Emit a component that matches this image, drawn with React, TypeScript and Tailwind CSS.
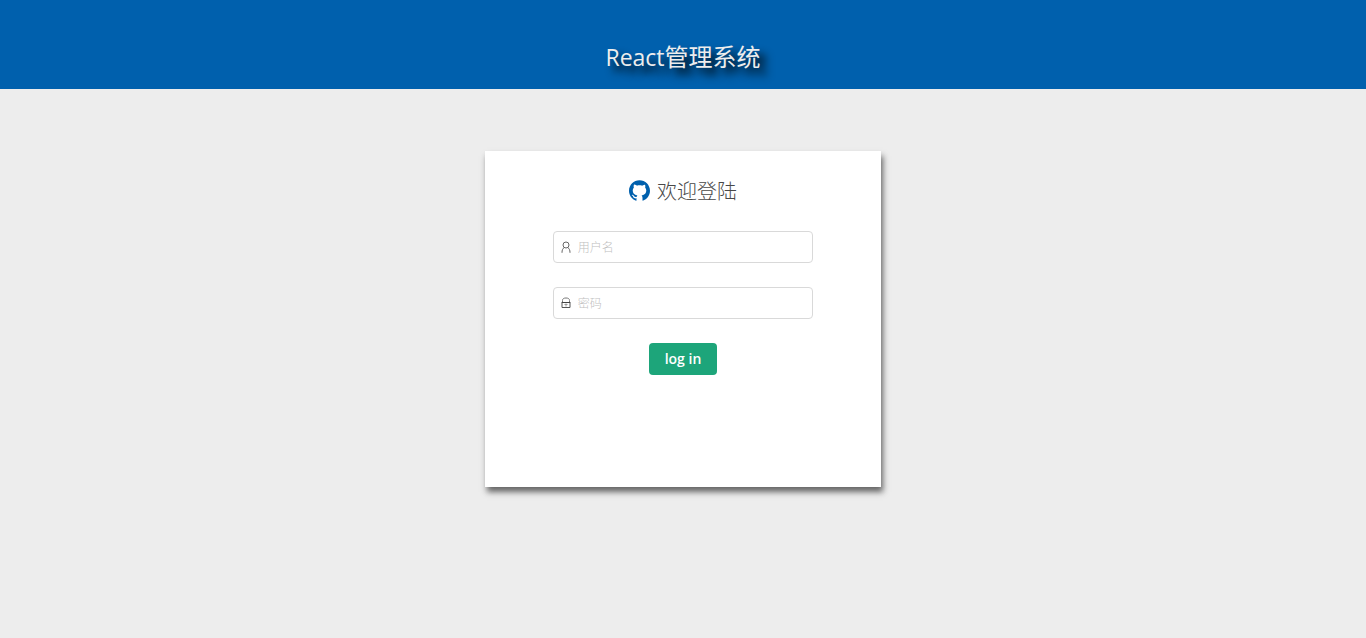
import React, { useState } from "react";

function GithubIcon() {
  return (
    <svg viewBox="64 64 896 896" className="mb-[3px] size-[21px] shrink-0 fill-[#0060ad]" aria-hidden="true">
      <path d="M511.6 76.3C264.3 76.2 64 276.4 64 523.5 64 718.9 189.3 885 363.8 946c23.5 5.9 19.9-10.8 19.9-22.2v-77.5c-135.7 15.9-141.2-73.9-150.3-88.9C215 726 171.5 718 184.5 703c30.9-15.9 62.4 4 98.9 57.9 26.4 39.1 77.9 32.5 104 26 5.7-23.5 17.9-44.5 34.7-60.8-140.6-25.2-199.2-111-199.2-213 0-49.5 16.3-95 48.3-131.7-20.4-60.5 1.9-112.3 4.9-120 58.1-5.2 118.5 41.6 123.2 45.3 33-8.9 70.7-13.6 112.9-13.6 42.4 0 80.2 4.9 113.5 13.9 11.3-8.6 67.3-48.8 121.3-43.9 2.9 7.7 24.7 58.3 5.5 118 32.4 36.8 48.9 82.7 48.9 132.3 0 102.2-59 188.1-200 212.9a127.5 127.5 0 0 1 38.1 91v112.5c.8 9 0 17.9 15 17.9 177.1-59.7 304.6-227 304.6-424.1 0-247.2-200.4-447.3-447.5-447.3z" />
    </svg>
  );
}

function UserIcon() {
  return (
    <svg viewBox="0 0 12 12" className="size-3 shrink-0 fill-none stroke-[#666]" aria-hidden="true">
      <circle cx="6" cy="4" r="3" />
      <path d="M4.4 6.6C2.7 7.4 2 9 2 11.8M7.6 6.6C9.3 7.4 10 9 10 11.8" />
    </svg>
  );
}

function LockIcon() {
  return (
    <svg viewBox="0 0 12 12" className="size-3 shrink-0 fill-none" aria-hidden="true">
      <path d="M2.5 5V3.5C2.5 1.5 4 1 6 1s3.5.5 3.5 2.5V5" stroke="#777" />
      <path d="M1.5 5.5h9" stroke="#444" />
      <path d="M2 6v4.5h8V6" stroke="#555" />
      <path d="M6 6.5v3M4.5 7.5h3" stroke="#999" />
    </svg>
  );
}

type FieldProps = {
  id: string;
  type: string;
  label: string;
  icon: React.ReactNode;
};

function Field({ id, type, label, icon }: FieldProps) {
  const [value, setValue] = useState("");
  return (
    <label
      htmlFor={id}
      className="flex h-8 w-full items-center gap-[6px] rounded border border-[#d9d9d9] bg-white px-[6px] focus-within:border-[#1da57a]"
    >
      {icon}
      <input
        id={id}
        type={type}
        value={value}
        aria-label={label}
        placeholder={label}
        onChange={(e) => setValue(e.target.value)}
        className="min-w-0 flex-1 bg-transparent pt-[2px] text-xs font-light text-[#555] outline-none placeholder:text-[#bfbfbf]"
      />
    </label>
  );
}

export default function App() {
  return (
    <div className="min-h-screen bg-[#ededed] font-['Open_Sans','Noto_Sans_CJK_SC',sans-serif]">
      <header className="flex justify-center bg-[#0060ad] pt-[39px] pb-[14px]">
        <h1 className="text-2xl leading-9 text-[#ededed] [text-shadow:7px_7px_8px_#000]">
          <span className="text-[23px]">React</span>管理系统
        </h1>
      </header>
      <main className="flex justify-center pt-[62px]">
        <section className="flex w-[29%] flex-col items-center bg-white pt-6 pb-28 shadow-[2px_5px_6px_#666]">
          <h2 className="flex items-center gap-[7px] pt-px text-xl leading-8 font-light text-[#484848]">
            <GithubIcon />
            <span>欢迎登陆</span>
          </h2>
          <form
            className="mt-[23px] flex w-[65.8%] flex-col items-center gap-6"
            onSubmit={(e) => e.preventDefault()}
          >
            <Field id="username" type="text" label="用户名" icon={<UserIcon />} />
            <Field id="password" type="password" label="密码" icon={<LockIcon />} />
            <button
              type="submit"
              className="h-8 rounded bg-[#1da57a] px-4 text-sm font-semibold text-white"
            >
              log in
            </button>
          </form>
        </section>
      </main>
    </div>
  );
}
